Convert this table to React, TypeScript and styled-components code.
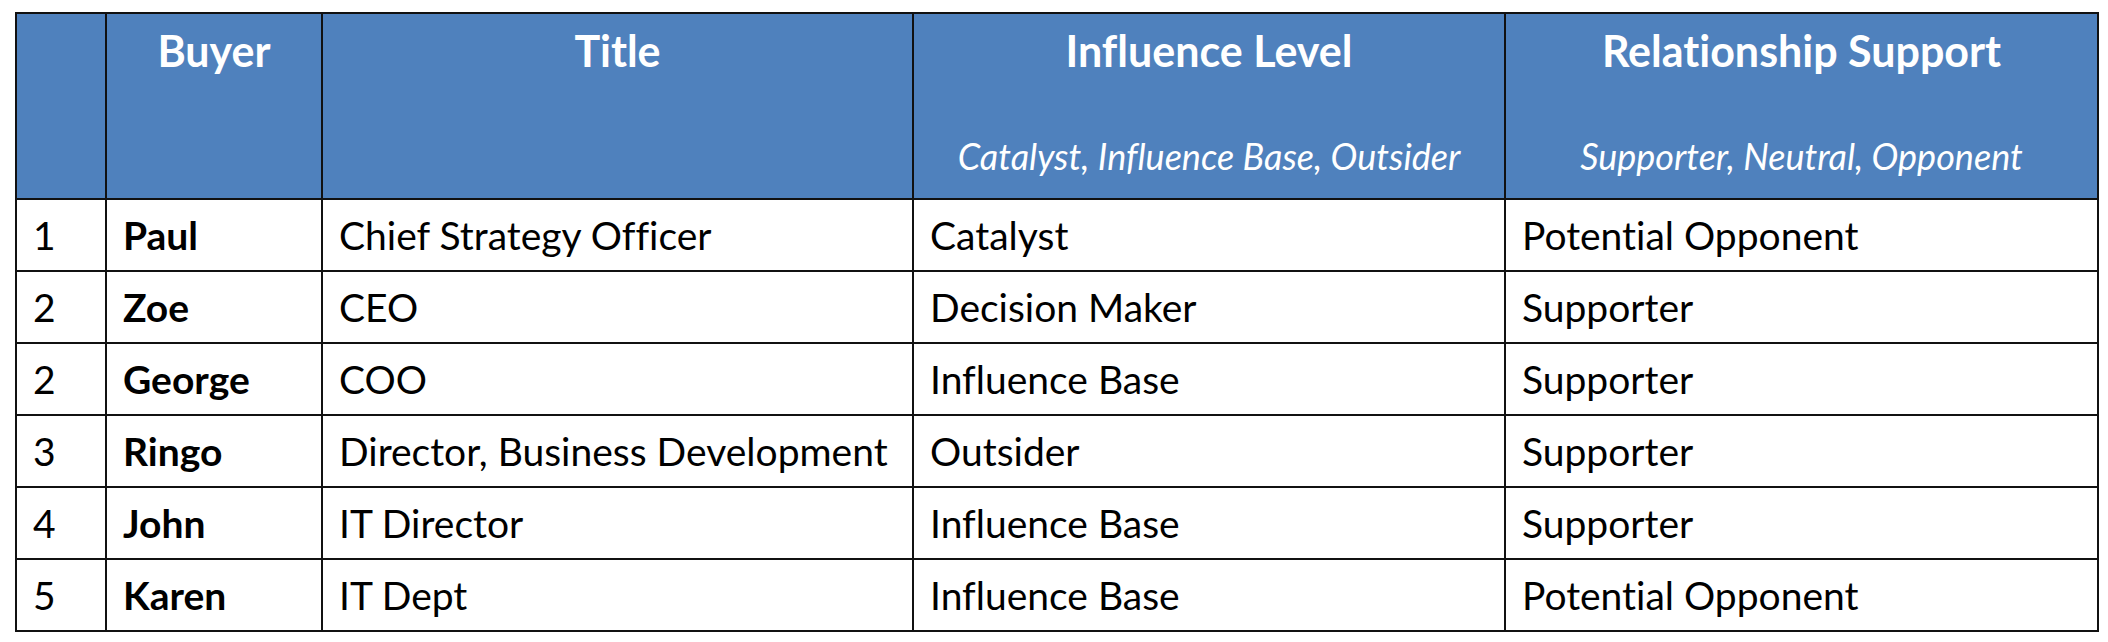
import React from "react";
import styled, { createGlobalStyle } from "styled-components";

const GlobalStyle = createGlobalStyle`
  html, body {
    margin: 0;
    padding: 0;
    background: #ffffff;
  }
  body {
    font-family: Lato, "Open Sans", "Liberation Sans", sans-serif;
    color: #000000;
    font-variant-ligatures: none;
    font-feature-settings: "liga" 0, "clig" 0;
  }
`;

const Page = styled.div`
  padding: 12px 0 0 15px;
`;

const Table = styled.table`
  border-collapse: collapse;
  table-layout: fixed;
  width: 2082px;
  border: 2px solid #111111;
`;

const HeadRow = styled.tr`
  height: 184px;
  background: #4f81bd;
`;

const HeadCell = styled.th`
  border: 2px solid #111111;
  padding: 0 8px;
  vertical-align: top;
  text-align: center;
  color: #ffffff;
`;

const HeadInner = styled.div`
  height: 184px;
  display: flex;
  flex-direction: column;
  justify-content: space-between;
  align-items: center;
  padding: 11px 0 20px;
  box-sizing: border-box;
`;

const HeadTitle = styled.div`
  font-size: 43px;
  font-weight: 700;
  line-height: 52px;
`;

const HeadSub = styled.div`
  font-size: 36px;
  font-style: italic;
  font-weight: 400;
  line-height: 44px;
  white-space: nowrap;
`;

const BodyRow = styled.tr`
  height: 72px;
`;

const Cell = styled.td<{ $bold?: boolean }>`
  border: 2px solid #111111;
  padding: 0 16px;
  font-size: 39px;
  line-height: 44px;
  font-weight: ${(p) => (p.$bold ? 700 : 400)};
  white-space: nowrap;
  vertical-align: middle;
`;

const columns = [
  { title: "", sub: "", width: 90 },
  { title: "Buyer", sub: "", width: 216 },
  { title: "Title", sub: "", width: 591 },
  { title: "Influence Level", sub: "Catalyst, Influence Base, Outsider", width: 592 },
  { title: "Relationship Support", sub: "Supporter, Neutral, Opponent", width: 593 },
];

const rows = [
  ["1", "Paul", "Chief Strategy Officer", "Catalyst", "Potential Opponent"],
  ["2", "Zoe", "CEO", "Decision Maker", "Supporter"],
  ["2", "George", "COO", "Influence Base", "Supporter"],
  ["3", "Ringo", "Director, Business Development", "Outsider", "Supporter"],
  ["4", "John", "IT Director", "Influence Base", "Supporter"],
  ["5", "Karen", "IT Dept", "Influence Base", "Potential Opponent"],
];

export default function App() {
  return (
    <>
      <GlobalStyle />
      <Page>
        <Table>
          <colgroup>
            {columns.map((c, i) => (
              <col key={i} style={{ width: c.width }} />
            ))}
          </colgroup>
          <thead>
            <HeadRow>
              {columns.map((c, i) => (
                <HeadCell key={i}>
                  <HeadInner>
                    <HeadTitle>{c.title}</HeadTitle>
                    <HeadSub>{c.sub}</HeadSub>
                  </HeadInner>
                </HeadCell>
              ))}
            </HeadRow>
          </thead>
          <tbody>
            {rows.map((r, ri) => (
              <BodyRow key={ri}>
                {r.map((v, ci) => (
                  <Cell key={ci} $bold={ci === 1}>
                    {v}
                  </Cell>
                ))}
              </BodyRow>
            ))}
          </tbody>
        </Table>
      </Page>
    </>
  );
}
